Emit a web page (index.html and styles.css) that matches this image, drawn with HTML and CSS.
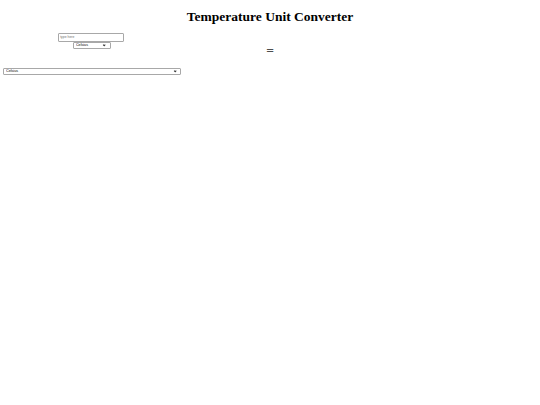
FILE: index.html
```html
<!DOCTYPE html>
<html lang="en">
<head>
<meta charset="utf-8">
<title>Temperature Unit Converter</title>
<link rel="stylesheet" href="styles.css">
</head>
<body>
  <h1 class="title">Temperature Unit Converter</h1>
  <div class="converter">
    <div class="side">
      <input class="value-input" type="text" placeholder="type here">
      <span class="select-wrap">
        <select class="unit-select">
          <option>Celsius</option>
          <option>Fahrenheit</option>
          <option>Kelvin</option>
        </select>
      </span>
    </div>
    <h1 class="equals">=</h1>
    <div class="side-empty"></div>
    <div class="result">
      <span class="select-wrap select-wrap-wide">
        <select class="unit-select">
          <option>Celsius</option>
          <option>Fahrenheit</option>
          <option>Kelvin</option>
        </select>
      </span>
    </div>
  </div>
</body>
</html>
```

FILE: styles.css
```css
html, body {
  background: #ffffff;
}

body {
  margin: 0 3.2px;
  padding: 0;
  font-family: "Liberation Serif", "Times New Roman", serif;
  font-size: 6.75px;
  color: #000000;
}

.title {
  margin: 0;
  padding: 8.6px 0 8.6px;
  font-size: 13.5px;
  line-height: 15.5px;
  font-weight: bold;
  text-align: center;
}

.converter {
  display: grid;
  grid-template-columns: 1fr 1fr 1fr;
}

.side {
  display: flex;
  flex-direction: column;
  align-items: center;
}

.value-input {
  box-sizing: border-box;
  width: 66.5px;
  height: 9px;
  margin: 0 2.6px 0 0;
  padding: 0 1.6px;
  border: 1px solid #a8a8a8;
  border-radius: 1px;
  font-family: "Liberation Sans", Arial, sans-serif;
  font-size: 3.4px;
  color: #000000;
  background: #ffffff;
  outline: none;
}

.value-input::placeholder {
  color: #707070;
}

.select-wrap {
  position: relative;
  display: block;
  width: 38px;
  height: 7.4px;
}

.select-wrap::after {
  content: "";
  position: absolute;
  right: 5.6px;
  top: 2.3px;
  width: 1.4px;
  height: 1.4px;
  border-right: 0.8px solid #333333;
  border-bottom: 0.8px solid #333333;
  transform: rotate(45deg);
  pointer-events: none;
}

.select-wrap-wide {
  width: 100%;
}

.select-wrap-wide::after {
  right: 4.6px;
}

.unit-select {
  -webkit-appearance: none;
  appearance: none;
  display: block;
  box-sizing: border-box;
  width: 100%;
  height: 7.4px;
  margin: 0;
  padding: 0 0 0 1.8px;
  border: 1px solid #a8a8a8;
  border-radius: 1px;
  font-family: "Liberation Sans", Arial, sans-serif;
  font-size: 3.7px;
  line-height: 5.4px;
  color: #000000;
  background: #ffffff;
  outline: none;
}

.equals {
  margin: 0;
  padding: 10.5px 0 9px;
  font-size: 13.5px;
  line-height: 15.5px;
  font-weight: bold;
  color: #4d4d4d;
  text-align: center;
}

.result {
  grid-column: 1;
}
```
